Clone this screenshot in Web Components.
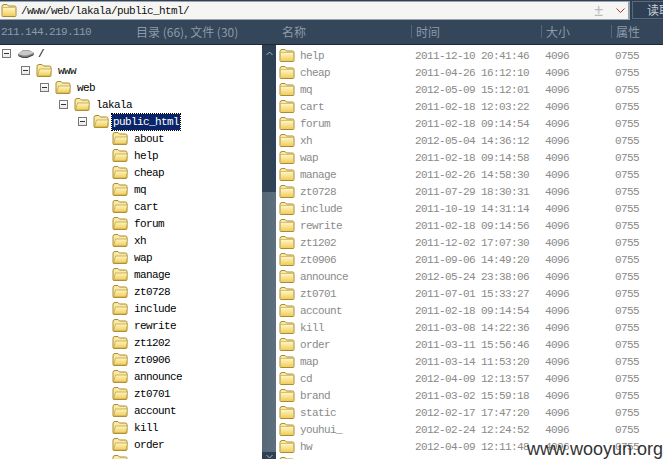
<!DOCTYPE html>
<html>
<head>
<meta charset="utf-8">
<style>
  html, body { margin: 0; padding: 0; height: 100%; overflow: hidden; background: #fff; }
</style>
</head>
<body>
<file-manager></file-manager>
<script>
const FOLDER = (open) => `<svg width="16" height="15" viewBox="0 0 16 15" style="display:block;flex:none">
  <defs><linearGradient id="fg" x1="0" y1="0" x2="0" y2="1"><stop offset="0" stop-color="#fff6c4"/><stop offset="1" stop-color="#f1cc58"/></linearGradient></defs>
  <path d="M1 3.5 Q1 1.5 3 1.5 H6 L7.5 3 H13.5 Q15 3 15 4.5 V12.5 Q15 13.5 14 13.5 H2 Q1 13.5 1 12.5 Z" fill="#f8e9a4" stroke="#a98c34"/>
  ${open
    ? `<path d="M1.5 13 L3.5 6 H15.5 L14 13 Z" fill="url(#fg)" stroke="#b89c44" stroke-width=".7"/>`
    : `<rect x="2" y="5" width="12" height="8" fill="url(#fg)"/><path d="M2 4.5 H14" stroke="#c0a450" stroke-width=".6"/>`}
</svg>`;

const DISK = `<svg width="18" height="12" viewBox="0 0 18 12" style="display:block;flex:none">
  <path d="M1 6 L6 2 H12 L17 5 V7 L10 10 H6 L1 8 Z" fill="#7d7d7d"/>
  <path d="M1 6 L6 2.5 H12 L17 5 L10 7.5 H6 Z" fill="#c9c9c9"/>
  <path d="M2 8 L6 9.5 H10 L16 7" stroke="#4a4a4a" fill="none"/>
</svg>`;

class PathBar extends HTMLElement {
  constructor() {
    super();
    this.attachShadow({ mode: "open" });
    this.shadowRoot.innerHTML = `
      <style>
        :host { display: flex; height: 20px; box-sizing: border-box; background: #2f4054; padding-top: 1px; gap: 2px; }
        .box { flex: 1; display: flex; align-items: center; gap: 4px; background: #f5f5f3; border: 1px solid #9aa3ac; border-width: 1px 2px 1px 0; padding-left: 1px; }
        .text { font: 11px/18px "Liberation Mono", monospace; letter-spacing: -.6px; color: #111; flex: 1; }
        .plus { font: 16px/18px "Liberation Sans", sans-serif; color: #bbb; margin-right: 9px; }
        .arrow { margin-right: 3px; }
        .btn { width: 31px; padding-left: 14px; box-sizing: border-box; overflow: hidden; white-space: nowrap; border: 1px solid #5a6a7a; border-right: 0; background: #2f4054; color: #c8ced4; font: 12px/16px "Noto Sans CJK SC", sans-serif; margin-bottom: 1px; }
      </style>
      <div class="box">
        ${FOLDER(false)}
        <span class="text"><slot></slot></span>
        <span class="plus">±</span>
        <svg class="arrow" width="9" height="6" viewBox="0 0 9 6"><path d="M.5 .5 L4.5 4.5 L8.5 .5" fill="none" stroke="#b03030"/></svg>
      </div>
      <div class="btn">读取</div>`;
  }
}

class HeaderBar extends HTMLElement {
  constructor() {
    super();
    this.attachShadow({ mode: "open" });
    this.shadowRoot.innerHTML = `
      <style>
        :host { display: grid; grid-template-columns: 136px 141px 134px 130px 70px 1fr; height: 25px; background: #33465a; border-bottom: 1px solid #1c2a38; box-sizing: border-box; color: #8e9aa6; font: 12px/24px "Noto Sans CJK SC", sans-serif; }
        .ip { font: 11px/24px "Liberation Mono", monospace; letter-spacing: -.6px; padding-left: 1px; }
        .col { padding-left: 5px; position: relative; white-space: nowrap; }
        .col.sep::before { content: ""; position: absolute; left: 0; top: 5px; bottom: 6px; width: 1px; background: #54667a; }
      </style>
      <div class="ip">211.144.219.110</div>
      <div>目录 (66), 文件 (30)</div>
      <div class="col">名称</div>
      <div class="col sep">时间</div>
      <div class="col sep">大小</div>
      <div class="col sep">属性</div>`;
  }
}

class TreeRow extends HTMLElement {
  constructor() {
    super();
    this.attachShadow({ mode: "open" });
    const depth = +this.getAttribute("depth") || 0;
    const toggle = this.hasAttribute("toggle");
    const selected = this.hasAttribute("selected");
    const icon = this.hasAttribute("disk") ? DISK : FOLDER(true);
    this.shadowRoot.innerHTML = `
      <style>
        :host { display: flex; align-items: center; height: 17px; color: #000; font: 11px/15px "Liberation Mono", monospace; letter-spacing: -.6px; white-space: nowrap; padding-left: ${2 + depth * 19}px; }
        .tg { width: 7px; height: 7px; border: 1px solid #777; background: linear-gradient(#fff, #e8e8e8); position: relative; margin-right: 6px; flex: none; }
        .tg::after { content: ""; position: absolute; left: 1px; right: 1px; top: 3px; height: 1px; background: #333; }
        .gap { width: 15px; flex: none; }
        .label { margin-left: ${selected ? 3 : this.hasAttribute("disk") ? 2 : 5}px; padding: 1px 1px 0; }
        .sel { background: #0a246a; color: #fff; outline: 1px dotted #000; }
      </style>
      ${toggle ? `<span class="tg"></span>` : `<span class="gap"></span>`}
      ${icon}
      <span class="label ${selected ? "sel" : ""}"><slot></slot></span>`;
  }
}

class FileRow extends HTMLElement {
  constructor() {
    super();
    this.attachShadow({ mode: "open" });
    const [name, time] = [this.getAttribute("name"), this.getAttribute("time")];
    this.shadowRoot.innerHTML = `
      <style>
        :host { display: grid; grid-template-columns: 136px 130px 70px 1fr; height: 17px; align-items: center; color: #8a8a8a; font: 11px/13px "Liberation Mono", monospace; letter-spacing: -.6px; white-space: nowrap; padding-left: 3px; }
        .name { display: flex; align-items: center; gap: 5px; }
        .t { padding-top: 2px; }
      </style>
      <div class="name">${FOLDER(false)}<span class="t">${name}</span></div>
      <div class="t">${time}</div>
      <div class="t">${name ? "4096" : ""}</div>
      <div class="t">${name ? "0755" : ""}</div>`;
  }
}

class VScroll extends HTMLElement {
  constructor() {
    super();
    this.attachShadow({ mode: "open" });
    this.shadowRoot.innerHTML = `
      <style>
        :host { display: flex; flex-direction: column; width: 14px; flex: none; background: linear-gradient(#2f4054, #34495e); }
        .up { height: 20px; display: flex; justify-content: center; padding-top: 6px; box-sizing: border-box; flex: none; }
        .track { height: 127px; flex: none; }
        .thumb { flex: 1; background: linear-gradient(90deg, #566777, #5f6f7f); }
        .down { height: 7px; flex: none; display: flex; justify-content: center; padding-top: 2px; box-sizing: border-box; background: #2f4054; }
      </style>
      <div class="up"><svg width="7" height="5" viewBox="0 0 7 5"><path d="M.5 4 L3.5 1 L6.5 4" fill="none" stroke="#aab4be"/></svg></div>
      <div class="track"></div>
      <div class="thumb"></div>
      <div class="down"><svg width="7" height="5" viewBox="0 0 7 5"><path d="M.5 1 L3.5 4 L6.5 1" fill="none" stroke="#aab4be"/></svg></div>`;
  }
}

class FileManager extends HTMLElement {
  constructor() {
    super();
    this.attachShadow({ mode: "open" });
    const tree = "about help cheap mq cart forum xh wap manage zt0728 include rewrite zt1202 zt0906 announce zt0701 account kill order".split(" ");
    const files = [
      ["help","2011-12-10 20:41:46"],["cheap","2011-04-26 16:12:10"],["mq","2012-05-09 15:12:01"],
      ["cart","2011-02-18 12:03:22"],["forum","2011-02-18 09:14:54"],["xh","2012-05-04 14:36:12"],
      ["wap","2011-02-18 09:14:58"],["manage","2011-02-26 14:58:30"],["zt0728","2011-07-29 18:30:31"],
      ["include","2011-10-19 14:31:14"],["rewrite","2011-02-18 09:14:56"],["zt1202","2011-12-02 17:07:30"],
      ["zt0906","2011-09-06 14:49:20"],["announce","2012-05-24 23:38:06"],["zt0701","2011-07-01 15:33:27"],
      ["account","2011-02-18 09:14:54"],["kill","2011-03-08 14:22:36"],["order","2011-03-11 15:56:46"],
      ["map","2011-03-14 11:53:20"],["cd","2012-04-09 12:13:57"],["brand","2011-03-02 15:59:18"],
      ["static","2012-02-17 17:47:20"],["youhui_","2012-02-24 12:24:52"],["hw","2012-04-09 12:11:48"],
      ["",""]
    ];
    this.shadowRoot.innerHTML = `
      <style>
        :host { display: flex; flex-direction: column; width: 663px; height: 459px; overflow: hidden; position: relative; background: #fff; }
        .main { display: flex; flex: 1; min-height: 0; }
        .tree { width: 262px; flex: none; overflow: hidden; }
        .files { flex: 1; overflow: hidden; padding-top: 2px; }
        .watermark { position: absolute; right: 0; bottom: -2px; font: 18px/24px "Liberation Sans", sans-serif; color: #333; }
      </style>
      <path-bar>/www/web/lakala/public_html/</path-bar>
      <header-bar></header-bar>
      <div class="main">
        <div class="tree">
          <tree-row depth="0" toggle disk>/</tree-row>
          <tree-row depth="1" toggle>www</tree-row>
          <tree-row depth="2" toggle>web</tree-row>
          <tree-row depth="3" toggle>lakala</tree-row>
          <tree-row depth="4" toggle selected>public_html</tree-row>
          ${tree.map(n => `<tree-row depth="5">${n}</tree-row>`).join("")}
          <tree-row depth="5"></tree-row>
        </div>
        <v-scroll></v-scroll>
        <div class="files">
          ${files.map(([n, t]) => `<file-row name="${n}" time="${t}"></file-row>`).join("")}
        </div>
      </div>
      <div class="watermark">www.wooyun.org</div>`;
  }
}

customElements.define("path-bar", PathBar);
customElements.define("header-bar", HeaderBar);
customElements.define("tree-row", TreeRow);
customElements.define("file-row", FileRow);
customElements.define("v-scroll", VScroll);
customElements.define("file-manager", FileManager);
</script>
</body>
</html>
